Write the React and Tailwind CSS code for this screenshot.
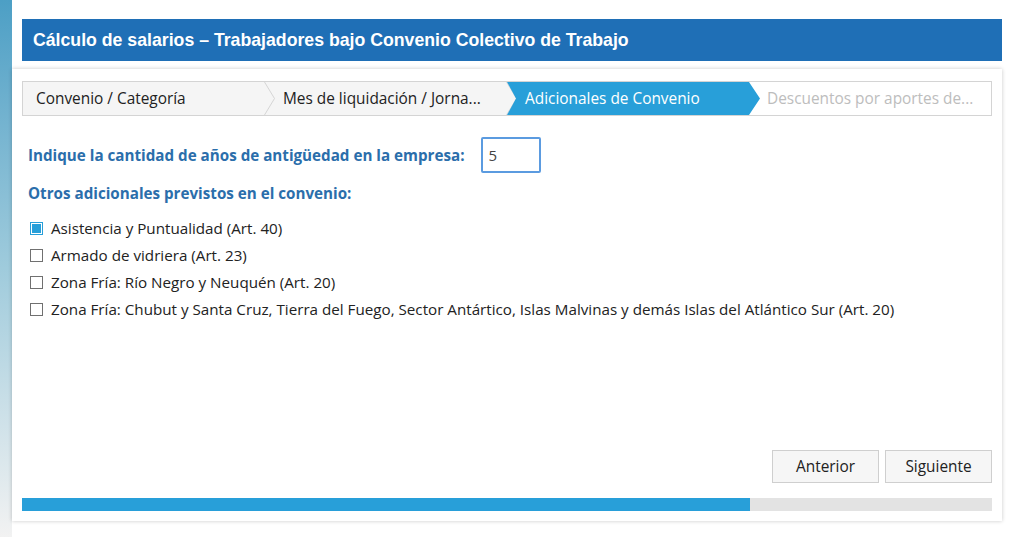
import React, { useState } from "react";

const steps = [
  { label: "Convenio / Categoría", state: "done" },
  { label: "Mes de liquidación / Jorna...", state: "done" },
  { label: "Adicionales de Convenio", state: "active" },
  { label: "Descuentos por aportes de...", state: "todo" },
];

const extras = [
  "Asistencia y Puntualidad (Art. 40)",
  "Armado de vidriera (Art. 23)",
  "Zona Fría: Río Negro y Neuquén (Art. 20)",
  "Zona Fría: Chubut y Santa Cruz, Tierra del Fuego, Sector Antártico, Islas Malvinas y demás Islas del Atlántico Sur (Art. 20)",
];

const Chevron = () => (
  <svg
    className="absolute top-0 right-[-11px] z-10 h-full w-[12px]"
    viewBox="0 0 12 35"
    preserveAspectRatio="none"
  >
    <polygon points="0,0 10.5,17.5 0,35" fill="#f5f5f5" />
    <polyline points="0.5,0 10.5,17.5 0.5,35" fill="none" stroke="#d4d4d4" strokeWidth="1" />
  </svg>
);

const Step = ({ label, state, first }) => {
  if (state === "active") {
    return (
      <div className="relative flex min-w-0 items-center pl-[18px]">
        <div className="absolute inset-y-0 left-0 right-[-11px] z-20 bg-[#289fd9] [clip-path:polygon(0_0,calc(100%-11px)_0,100%_50%,calc(100%-11px)_100%,0_100%,9px_50%)]" />
        <span className="relative z-30 whitespace-nowrap text-white">{label}</span>
      </div>
    );
  }
  return (
    <div
      className={
        "relative flex min-w-0 items-center " +
        (first ? "pl-[13px] " : "pl-[18px] ") +
        (state === "done" ? "bg-[#f5f5f5] text-[#222]" : "bg-white text-[#bdbdbd]")
      }
    >
      <span className="whitespace-nowrap">{label}</span>
      {state === "done" && <Chevron />}
    </div>
  );
};

const Check = ({ checked, onClick }) => (
  <button
    type="button"
    onClick={onClick}
    className={
      "flex h-[13px] w-[13px] shrink-0 items-center justify-center border " +
      (checked ? "border-[#289fd9] bg-white" : "border-[#707070] bg-white")
    }
  >
    {checked && <span className="h-[9px] w-[9px] bg-[#289fd9]" />}
  </button>
);

export default function App() {
  const [years, setYears] = useState("5");
  const [checked, setChecked] = useState([true, false, false, false]);

  const toggle = (i) => {
    const next = [...checked];
    next[i] = !next[i];
    setChecked(next);
  };

  return (
    <div className="flex min-h-[537px] bg-white font-['Open_Sans',sans-serif]">
      {/* left strip */}
      <div className="w-[12px] shrink-0 bg-gradient-to-b from-[#4c9fc5] via-[#9fcbdc] to-[#f2f2f2]" />

      <div className="flex w-[990px] flex-col">
        {/* header */}
        <div className="ml-[10px] mt-[19px] flex h-[42px] items-center bg-[#1f6fb6] pl-[11px]">
          <h1 className="font-['Liberation_Sans',Arial,sans-serif] text-[17.7px] font-bold text-white">
            Cálculo de salarios – Trabajadores bajo Convenio Colectivo de Trabajo
          </h1>
        </div>

        {/* panel */}
        <div className="mt-[8px] flex h-[452px] flex-col bg-white px-[10px] pt-[12px] pb-[10px] shadow-[0_0_4px_rgba(0,0,0,0.22)]">
          <div className="grid h-[35px] grid-cols-4 overflow-hidden border border-[#d4d4d4] text-[15.4px]">
            {steps.map((s, i) => (
              <Step key={s.label} label={s.label} state={s.state} first={i === 0} />
            ))}
          </div>

          <div className="mt-[21px] flex items-center pl-[6px]">
            <label className="text-[15.2px] font-bold text-[#2b6eab]">
              Indique la cantidad de años de antigüedad en la empresa:
            </label>
            <input
              value={years}
              onChange={(e) => setYears(e.target.value)}
              className="ml-[16px] h-[36px] w-[60px] rounded-[2px] border-2 border-[#5b9be0] px-[6px] text-[15px] text-[#444] outline-none"
            />
          </div>

          <p className="mt-[9px] pl-[6px] text-[15.2px] font-bold text-[#2b6eab]">
            Otros adicionales previstos en el convenio:
          </p>

          <div className="mt-[10px] flex flex-col pl-[8px]">
            {extras.map((label, i) => (
              <label key={label} className="flex h-[27px] items-center gap-[8px] text-[15.2px] text-[#222]">
                <Check checked={checked[i]} onClick={() => toggle(i)} />
                <span>{label}</span>
              </label>
            ))}
          </div>

          <div className="flex-1" />

          <div className="flex justify-end gap-[6px]">
            <button className="h-[33px] w-[107px] border border-[#cfcfcf] bg-[#f6f6f6] text-[15.4px] text-[#222]">
              Anterior
            </button>
            <button className="h-[33px] w-[107px] border border-[#cfcfcf] bg-[#f6f6f6] text-[15.4px] text-[#222]">
              Siguiente
            </button>
          </div>

          <div className="mt-[15px] h-[13px] bg-[#e3e3e3]">
            <div className="h-full bg-[#289fd9]" style={{ width: "75%" }} />
          </div>
        </div>
      </div>
    </div>
  );
}
